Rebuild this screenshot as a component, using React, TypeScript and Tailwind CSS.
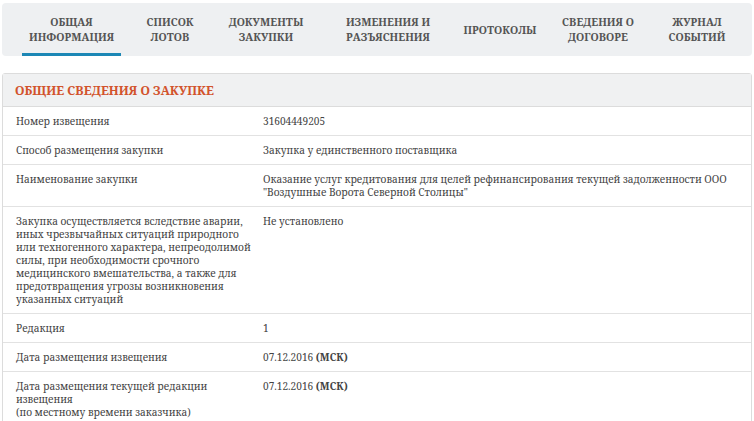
import React from 'react'

const tabs: { lines: string[]; w: string }[] = [
  { lines: ['Общая', 'информация'], w: 'w-[99px]' },
  { lines: ['Список', 'лотов'], w: 'w-[98px]' },
  { lines: ['Документы', 'закупки'], w: 'w-[94px]' },
  { lines: ['Изменения и', 'разъяснения'], w: 'w-[150px]' },
  { lines: ['Протоколы'], w: 'w-[74px]' },
  { lines: ['Сведения о', 'договоре'], w: 'w-[122px]' },
  { lines: ['Журнал', 'событий'], w: 'w-[76px]' },
]

const msk = (
  <>
    07.12.2016 <b className="font-bold">(МСК)</b>
  </>
)

const rows: { label: React.ReactNode; value: React.ReactNode }[] = [
  { label: 'Номер извещения', value: '31604449205' },
  { label: 'Способ размещения закупки', value: 'Закупка у единственного поставщика' },
  {
    label: 'Наименование закупки',
    value: 'Оказание услуг кредитования для целей рефинансирования текущей задолженности ООО "Воздушные Ворота Северной Столицы"',
  },
  {
    label:
      'Закупка осуществляется вследствие аварии, иных чрезвычайных ситуаций природного или техногенного характера, непреодолимой силы, при необходимости срочного медицинского вмешательства, а также для предотвращения угрозы возникновения указанных ситуаций',
    value: 'Не установлено',
  },
  { label: 'Редакция', value: '1' },
  { label: 'Дата размещения извещения', value: msk },
  {
    label: (
      <>
        Дата размещения текущей редакции извещения
        <br />
        (по местному времени заказчика)
      </>
    ),
    value: msk,
  },
]

export default function App() {
  return (
    <div className="min-h-screen bg-white px-[2px] pt-[3px] font-['Noto_Serif',serif] text-[#333]">
      {/* Tabs */}
      <div className="flex h-[53px] items-stretch rounded-[4px] bg-[#eef0f2] pl-[20px]">
        {tabs.map((t, i) => (
          <div
            key={i}
            className={
              'flex shrink-0 flex-col items-center justify-center whitespace-nowrap border-b-[3px] pt-[4px] text-center text-[10.6px] leading-[15px] font-bold uppercase text-[#555] ' +
              t.w +
              (i === 0 ? ' border-[#1c87b5]' : ' border-transparent')
            }
          >
            {t.lines.map((l, j) => (
              <span key={j}>{l}</span>
            ))}
          </div>
        ))}
      </div>

      {/* Card */}
      <div className="mt-[17px] rounded-t-[3px] border border-[#dcdcdc]">
        <div className="flex h-[33px] items-center border-b border-[#dcdcdc] bg-[#f0f1f2] px-[12px] pt-[2px]">
          <h2 className="text-[12.2px] font-bold uppercase text-[#d2532c]">Общие сведения о закупке</h2>
        </div>
        {rows.map((r, i) => (
          <div key={i} className="grid grid-cols-[248px_1fr] border-b border-[#e2e2e2] text-[10.1px] leading-[13px] text-[#444]">
            <div className="py-[7.5px] pr-0 pl-[13px]">{r.label}</div>
            <div className="py-[7.5px] pr-[14px] pl-[12px]">{r.value}</div>
          </div>
        ))}
      </div>
    </div>
  )
}
